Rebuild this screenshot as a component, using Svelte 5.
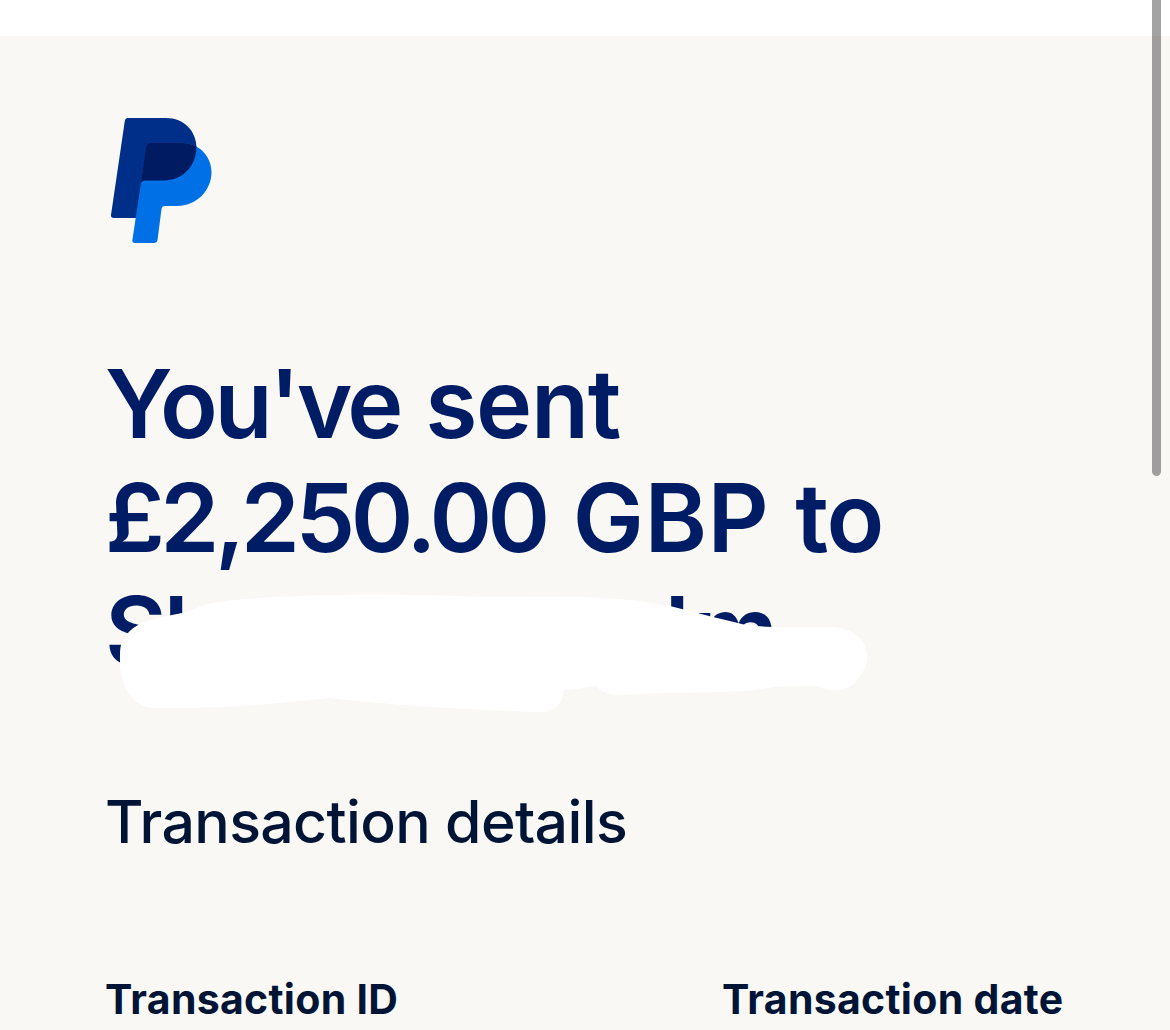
<script lang="ts">
	const columns = [
		{ label: 'Transaction ID', key: 'id' },
		{ label: 'Transaction date', key: 'date' }
	];
</script>

<div class="page">
	<main>
		<svg class="logo" viewBox="0 0 102 127" aria-label="PayPal">
			<path
				fill="#002f8a"
				d="M18 1H56C74 1 86.500 14 86.500 31C86.500 49 72 63.500 54 63.500H34V101H4Q.6 101 1 98L14.800 4Q15.300 1 18 1Z"
			/>
			<path
				fill="#0070e7"
				d="M40 26H72Q80 26 86.300 29.500C95 34 101.500 44 101.500 55C101.500 74 86 89 67 89H55Q52 89 51.500 92L47.500 123Q47 126 44 126H25Q22 126 22.400 123L36.500 29Q37 26 40 26Z"
			/>
			<path
				fill="#001b62"
				d="M40 26H72Q80 26 86.300 29.500C87 49 72 63.500 54 63.500H34.500Q32 63.500 30.800 66L36.200 29Q37 26 40 26Z"
			/>
		</svg>

		<h1>
			<span class="line first"><span>You've</span><span class="sent">sent</span></span>
			<span class="line amount"><span class="sum">£2,250.00</span><span class="gbp">GBP</span><span>to</span></span>
			<span class="line name">
				<span class="start">Sl</span><span class="end">lm</span>
				<svg class="cover" viewBox="0 0 760 130" aria-hidden="true">
					<path
						fill="#fff"
						d="M13 64C13 54 15 49 20 43Q26 36 35 32Q45 28 60 25L80 21C90 17 96 14 106 12C130 7 180 5 250 3.500C300 3 350 5 385 6C430 6 475 5 509 8C530 9 547 12 563 15L606 26L631 32Q641 35 665 36H724C744 37 760 47 760 65C760 78 754 83 749 90C742 99 725 103 711 95C690 95 675 95 660 97C635 102 590 101 530 103C507 105 498 104 489 95C477 96 468 99 457 99C456 115 445 123 430 121C370 119 290 115 222 107C170 113 110 118 45 117C25 114 12 97 13 64Z"
					/>
				</svg>
			</span>
		</h1>

		<h2>Transaction details</h2>

		<div class="columns">
			{#each columns as column (column.key)}
				<strong class={column.key}>{column.label}</strong>
			{/each}
		</div>
	</main>
	<div class="scrollbar"></div>
</div>

<style>
	:global(body) {
		margin: 0;
		overflow: hidden;
		background: #faf8f5;
	}

	.page {
		position: relative;
		box-sizing: border-box;
		height: 1030px;
		padding-top: 36px;
		background: linear-gradient(#fff 36px, #faf8f5 36px);
		color: #001435;
		font-family: Inter, 'Liberation Sans', sans-serif;
		overflow: hidden;
	}

	main {
		padding: 81px 0 0 105px;
	}

	.logo {
		display: block;
		width: 102px;
		height: 127px;
		margin-left: 5px;
	}

	h1 {
		margin: 103px 0 0;
		font-size: 95px;
		line-height: 113.5px;
		font-weight: 600;
		color: #001c64;
	}

	.line {
		display: flex;
		height: 113.5px;
		white-space: nowrap;
	}

	.first {
		gap: 25px;
		font-weight: 580;
		letter-spacing: -3.4px;
	}

	.sent {
		letter-spacing: -1.3px;
	}

	.amount {
		gap: 26px;
		letter-spacing: -1.5px;
	}

	.sum {
		letter-spacing: -4.5px;
	}

	.gbp {
		margin-left: 1px;
		letter-spacing: 0.5px;
	}

	.name {
		position: relative;
		gap: 479px;
	}

	.start {
		letter-spacing: -3px;
	}

	.end {
		letter-spacing: 3px;
	}

	.cover {
		position: absolute;
		left: 2px;
		top: 17px;
		width: 760px;
		height: 130px;
	}

	h2 {
		margin: 98px 0 0;
		font-size: 59px;
		line-height: 72px;
		font-weight: 450;
		letter-spacing: -0.65px;
	}

	.columns {
		display: grid;
		grid-template-columns: 617px 1fr;
		margin-top: 116px;
		font-size: 41px;
		line-height: 50px;
		white-space: nowrap;
	}

	.columns strong {
		font-weight: 720;
		letter-spacing: 0.3px;
	}

	.scrollbar {
		position: absolute;
		top: -10px;
		right: 9px;
		width: 9px;
		height: 486px;
		border-radius: 5px;
		background: rgba(0, 0, 0, 0.36);
	}
</style>
